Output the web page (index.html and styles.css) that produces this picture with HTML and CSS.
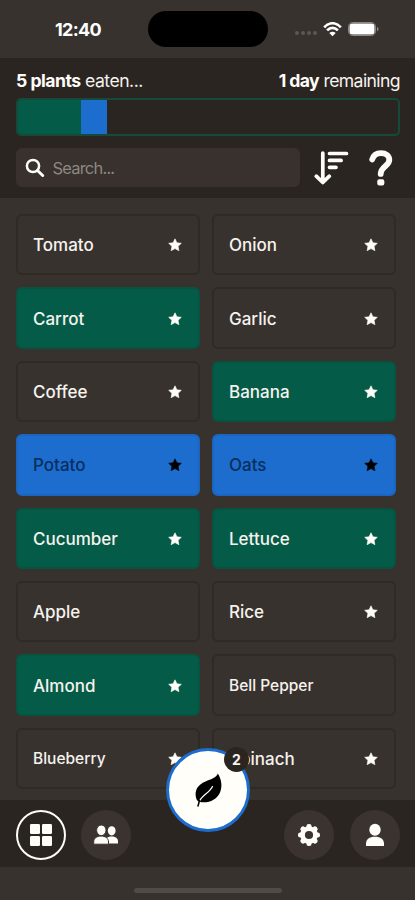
FILE: index.html
```html
<!DOCTYPE html>
<html lang="en">
<head>
<meta charset="utf-8">
<title>Plants</title>
<link rel="stylesheet" href="styles.css">
</head>
<body>
<svg class="defs" width="0" height="0">
  <symbol id="star" viewBox="0 0 14 14"><path d="M7 .8 8.9 4.8 13.3 5.3 10.1 8.3 10.9 12.7 7 10.6 3.1 12.7 3.9 8.3.7 5.3 5.1 4.8Z" fill="currentColor" stroke="currentColor" stroke-width=".6" stroke-linejoin="round"/></symbol>
</svg>
<div class="app">
  <div class="status">
    <span class="time">12:40</span>
    <div class="island"></div>
    <div class="signals">
      <div class="dots"><i></i><i></i><i></i><i></i></div>
      <svg class="wifi" width="19" height="15" viewBox="0 0 19 15"><path d="M1.2 5.3C6-.1 13-.1 17.8 5.3M4.1 8.4c3.3-3.3 7.500-3.300 10.800 0" fill="none" stroke="#fff" stroke-width="2.700"/><path d="M6.300 11c2-1.800 4.400-1.800 6.400 0L9.500 14.300Z" fill="#fff"/></svg>
      <svg class="battery" width="31" height="14" viewBox="0 0 31 14"><rect x=".5" y=".5" width="27" height="13" rx="4.200" fill="none" stroke="#8b8785"/><rect x="1.500" y="1.500" width="25" height="11" rx="3" fill="#fff"/><path d="M29 4.700c2 .8 2 3.800 0 4.600Z" fill="#8b8785"/></svg>
    </div>
  </div>
  <header class="header">
    <div class="summary"><span class="eaten"><b>5 plants</b> eaten...</span><span class="remaining"><b>1 day</b> remaining</span></div>
    <div class="progress"><div class="done"></div><div class="pending"></div></div>
    <div class="tools">
      <div class="search">
        <svg width="20" height="20" viewBox="0 0 20 20"><circle cx="8" cy="8" r="6.100" fill="none" stroke="#fffdf7" stroke-width="2.500"/><path d="m12.500 12.500 5.200 5" stroke="#fffdf7" stroke-width="3" stroke-linecap="round"/></svg>
        <span>Search...</span>
      </div>
      <svg class="sort" width="36" height="36" viewBox="0 0 36 36" fill="none" stroke="#fffdf7" stroke-width="3.700" stroke-linecap="round" stroke-linejoin="round"><path d="M8.800 3v29M2.300 26.200l6.500 6.300 6.500-6.300M15.500 3.500H32.500M15.500 10.400h11.600M15.500 17.300h6.500"/></svg>
      <svg class="help" width="24" height="36" viewBox="0 0 24 36"><path d="M3.200 9.500C4.500 5.200 7.800 3.200 12 3.200c5 0 8.300 2.500 8.300 6.700 0 6.100-8.600 6.800-8.600 14" fill="none" stroke="#fffdf7" stroke-width="5.800" stroke-linecap="round"/><rect x="8.300" y="29.300" width="7" height="6.200" rx="2" fill="#fffdf7"/></svg>
    </div>
  </header>
  <main class="grid">
    <div class="card"><span>Tomato</span><svg><use href="#star"/></svg></div>
    <div class="card"><span>Onion</span><svg><use href="#star"/></svg></div>
    <div class="card eaten-card"><span>Carrot</span><svg><use href="#star"/></svg></div>
    <div class="card"><span>Garlic</span><svg><use href="#star"/></svg></div>
    <div class="card"><span>Coffee</span><svg><use href="#star"/></svg></div>
    <div class="card eaten-card"><span>Banana</span><svg><use href="#star"/></svg></div>
    <div class="card selected"><span>Potato</span><svg><use href="#star"/></svg></div>
    <div class="card selected"><span>Oats</span><svg><use href="#star"/></svg></div>
    <div class="card eaten-card"><span>Cucumber</span><svg><use href="#star"/></svg></div>
    <div class="card eaten-card"><span>Lettuce</span><svg><use href="#star"/></svg></div>
    <div class="card"><span>Apple</span></div>
    <div class="card"><span>Rice</span><svg><use href="#star"/></svg></div>
    <div class="card eaten-card"><span>Almond</span><svg><use href="#star"/></svg></div>
    <div class="card small"><span>Bell Pepper</span></div>
    <div class="card small"><span>Blueberry</span><svg><use href="#star"/></svg></div>
    <div class="card"><span>Spinach</span><svg><use href="#star"/></svg></div>
  </main>
  <nav class="nav">
    <div class="tab active"><svg width="22" height="22" viewBox="0 0 22 22" fill="#fffdf7"><rect width="10" height="10" rx="1.300"/><rect x="12" width="10" height="10" rx="1.300"/><rect y="12" width="10" height="10" rx="1.300"/><rect x="12" y="12" width="10" height="10" rx="1.300"/></svg></div>
    <div class="tab people"><svg width="26" height="20" viewBox="0 0 26 20" fill="#fffdf7"><ellipse cx="18.700" cy="5.800" rx="3.900" ry="4.600"/><path d="M13.500 18.500H25V16.500c0-3.200-2.600-5-6.300-5-2.300 0-4 .6-5.200 1.800Z"/><g stroke="#3a3330" stroke-width="1"><ellipse cx="8.300" cy="5.300" rx="4.700" ry="5.300"/><path d="M.7 19.200V17c0-3.700 3-5.900 7.400-5.900s7.400 2.200 7.400 5.900v2.200Z"/></g></svg></div>
    <div class="tab gear"><svg width="24" height="24" viewBox="-12 -12 24 24"><g fill="#fffdf7"><circle r="8.800"/><g id="teeth"><rect x="-2.600" y="-11" width="5.200" height="22" rx="2.300"/><rect x="-11" y="-2.600" width="22" height="5.200" rx="2.300"/></g><use href="#teeth" transform="rotate(45)"/></g><circle r="4.100" fill="#3a3330"/></svg></div>
    <div class="tab"><svg width="20" height="24" viewBox="0 0 20 24" fill="#fffdf7"><ellipse cx="10" cy="6.700" rx="5.700" ry="6"/><path d="M1 23v-2.500c0-4 3.500-6.700 9-6.700s9 2.700 9 6.700V23Z"/></svg></div>
    <div class="leaf">
      <svg width="30" height="36" viewBox="0 0 30 36"><path d="M24.800 1.500C23.500 5.500 18.500 7 12.500 9.500 4.500 12.800 1.500 18.500 3 25.500c.5 2.500 1.700 3.800 3.500 4.300 8 2 17-1.500 20.500-9.300 2.800-6.200 1.200-14-2.200-19Z" fill="#000"/><path d="M19.500 14.500C16.500 21 9.500 22.500 6.500 29" fill="none" stroke="#fffef8" stroke-width="1.200" stroke-linecap="round"/><path d="M6.500 28.500 5 34" stroke="#000" stroke-width="1.500" stroke-linecap="round"/></svg>
      <span class="badge">2</span>
    </div>
  </nav>
  <div class="home"><div></div></div>
</div>
</body>
</html>
```
FILE: styles.css
```css
* { box-sizing: border-box; }
body { margin: 0; background: #38322f; color: #f6f2ee; font-family: Inter, "Liberation Sans", sans-serif; }
.defs { display: block; height: 0; }
.app { width: 415px; height: 900px; display: flex; flex-direction: column; overflow: hidden; }
.status { height: 58px; flex: none; display: grid; grid-template-columns: 148px 120px 1fr; align-items: center; }
.time { padding-left: 55px; font-size: 18px; font-weight: 700; letter-spacing: -.7px; color: #fff; }
.island { height: 36px; border-radius: 18px; background: #000; }
.signals { display: flex; align-items: center; padding-left: 27px; }
.dots { display: flex; gap: 2px; width: 28px; padding-top: 8px; }
.dots i { width: 4px; height: 4px; border-radius: 50%; background: #5d5754; }
.battery { margin-left: 6px; }
.header { height: 140px; flex: none; background: #2b2522; padding: 12px 15px 0 16px; }
.summary { display: flex; justify-content: space-between; height: 22px; font-size: 17.600px; line-height: 22px; letter-spacing: -.5px; white-space: nowrap; }
.summary b { font-weight: 700; color: #fffdf7; }
.remaining { letter-spacing: -.6px; }
.progress { height: 38px; margin-top: 6px; border: 2px solid #16493a; border-radius: 5px; display: flex; overflow: hidden; }
.done { width: 63px; background: #045c48; }
.pending { width: 26px; background: #1d6dcf; }
.tools { display: flex; align-items: center; margin-top: 12px; }
.search { width: 284px; height: 39px; border-radius: 6px; background: #38312e; display: flex; align-items: center; padding-left: 9px; font-size: 16.500px; letter-spacing: -.8px; color: #8d8782; }
.search span { margin-left: 7.500px; }
.sort { margin-left: 14px; }
.help { margin-left: 19px; }
.grid { flex: none; height: 602px; padding: 16px 19px 0 16px; display: grid; grid-template-columns: 184px 184px; grid-auto-rows: 61.400px; gap: 12px; }
.card { border: 2px solid #302a27; border-radius: 6px; display: flex; align-items: center; justify-content: space-between; padding: 1px 16px 0 15px; font-size: 17px; font-weight: 500; }
.card svg { width: 14px; height: 14px; color: #fffdf7; }
.eaten-card { background: #045c48; border-color: #07533f; }
.selected { background: #1d6dcf; border-color: #1b65bf; color: #082f5c; }
.selected svg { color: #000; }
.small { font-size: 15.500px; }
.nav { position: relative; z-index: 1; height: 67px; flex: none; background: #2b2522; display: flex; align-items: center; padding: 2px 15px 0 16px; }
.tab { width: 50px; height: 50px; border-radius: 50%; background: #3a3330; display: flex; align-items: center; justify-content: center; }
.active { background: #2b2522; border: 2px solid #fffdf7; }
.people { margin-left: 15px; }
.gear { margin-left: auto; margin-right: 16px; }
.leaf { position: absolute; left: 166px; top: -52px; width: 84px; height: 84px; border-radius: 50%; background: #fffef8; border: 3px solid #1d6dcf; display: flex; align-items: center; justify-content: center; }
.badge { position: absolute; left: 55px; top: -4px; width: 25px; height: 25px; border-radius: 50%; background: #2b2522; font-size: 14px; font-weight: 700; line-height: 26px; text-align: center; }
.home { height: 33px; flex: none; display: flex; justify-content: center; padding-top: 21px; }
.home div { width: 148px; height: 5px; border-radius: 3px; background: #504a48; }
```
